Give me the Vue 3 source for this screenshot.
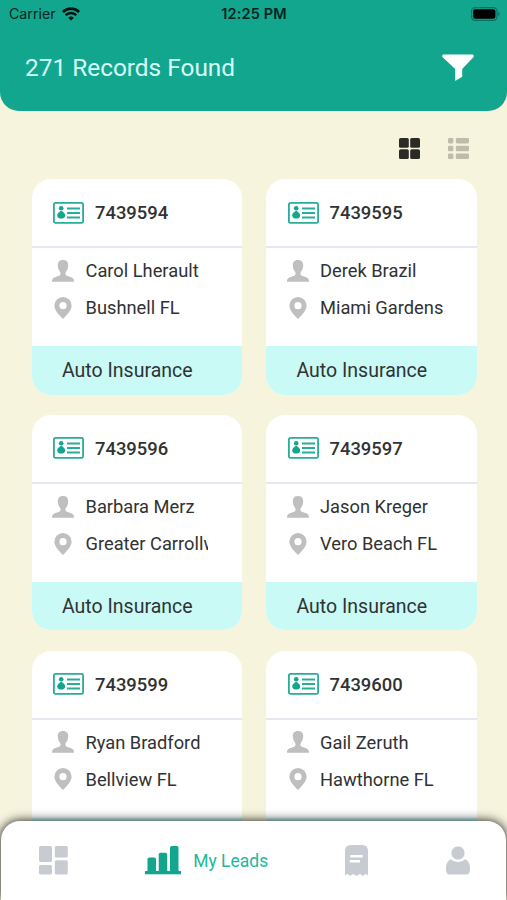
<template>
  <div class="screen">
    <header class="header">
      <div class="status-bar">
        <div class="carrier">
          <span>Carrier</span>
          <svg class="wifi" viewBox="0 0 18 14" width="18" height="14">
            <path d="M.9 5a11.5 11.5 0 0 1 16.2 0" />
            <path d="M3.7 8.2a7.500 7.500 0 0 1 10.600 0" />
            <path class="dot" d="M9 13.6 6.2 10.9a4 4 0 0 1 5.6 0z" />
          </svg>
        </div>
        <span class="time">12:25 PM</span>
        <svg class="battery" viewBox="0 0 30 14" width="30" height="14">
          <rect class="case" x=".6" y=".6" width="25.4" height="12.8" rx="3.6" />
          <rect x="2.2" y="2.3" width="22.2" height="9.4" rx="2" />
          <path class="cap" d="M27.3 4.9c1.9.8 1.9 3.4 0 4.2z" />
        </svg>
      </div>
      <div class="title-row">
        <h1>271 Records Found</h1>
        <svg class="filter" viewBox="0 0 34 28" width="34" height="28">
          <path d="M2 .5h30q1.4 1.1.6 2.4L21.2 15v7.7L14.2 27V15L1.4 2.9Q.6 1.6 2 .5z" />
        </svg>
      </div>
    </header>

    <div class="view-toggle">
      <svg viewBox="0 0 21 21" width="21" height="21" fill="#2b2a26">
        <rect width="9.8" height="9.8" rx="1.6" />
        <rect x="11.2" width="9.8" height="9.8" rx="1.6" />
        <rect y="11.2" width="9.8" height="9.8" rx="1.6" />
        <rect x="11.2" y="11.2" width="9.8" height="9.8" rx="1.6" />
      </svg>
      <svg viewBox="0 0 21 21" width="21" height="21" fill="#bebcaa">
        <template v-for="y in [0, 7.8, 15.6]" :key="y">
          <rect :y="y" width="5.4" height="5.4" rx="1.3" />
          <rect x="7.8" :y="y" width="13.2" height="5.4" rx="1.3" />
        </template>
      </svg>
    </div>

    <main class="leads">
      <article v-for="lead in leads" :key="lead.id" class="card">
        <div class="card-head">
          <svg class="id-icon" viewBox="0 0 31 22" width="31" height="22">
            <rect class="frame" x=".9" y=".9" width="29.2" height="20" rx="1.5" />
            <circle cx="8.2" cy="6.2" r="2.3" />
            <path d="M8.2 8.800c1 0 1.300.9 1.900 1.500 1.500.7 2.100 1.900 2.100 3.200 0 2.100-1.500 3.100-4 3.100s-4-1-4-3.100c0-1.300.6-2.500 2.100-3.200.6-.6.9-1.500 1.900-1.500z" />
            <path class="lines" d="M14 6.5h13M14 11h13M14 15.5h13" />
          </svg>
          <span>{{ lead.id }}</span>
        </div>
        <div class="card-body">
          <div class="row">
            <svg viewBox="0 0 22 22" width="22" height="22">
              <path d="M11 0c3.6 0 5.4 2.2 5.2 5.4-.1 2.6-.9 4.700-2.300 6.300-.8 1.600-.6 3.200.8 4l4.500 1.500c2 .8 2.800 2 2.800 4.500H0c0-2.500.8-3.700 2.800-4.500l4.500-1.500c1.400-.8 1.600-2.400.8-4-1.400-1.600-2.200-3.700-2.300-6.300C5.600 2.200 7.400 0 11 0z" />
            </svg>
            <span class="value">{{ lead.name }}</span>
          </div>
          <div class="row">
            <svg viewBox="0 0 22 22" width="22" height="22">
              <path fill-rule="evenodd" d="M11 0a8.6 8.6 0 0 1 8.6 8.6c0 4.6-3.8 8.6-8.6 13.4C6.2 17.2 2.4 13.2 2.4 8.6A8.6 8.6 0 0 1 11 0zm0 5.1a3.6 3.6 0 1 0 0 7.2 3.6 3.6 0 0 0 0-7.2z" />
            </svg>
            <span class="value">{{ lead.city }}</span>
          </div>
        </div>
        <div class="card-foot">Auto Insurance</div>
      </article>
    </main>

    <nav class="tab-bar">
      <svg class="tab-home" viewBox="0 0 29 29" width="29" height="29">
        <rect width="13" height="16" rx="1.5" />
        <rect x="15.8" width="13" height="11.5" rx="1.5" />
        <rect y="19" width="13" height="9.5" rx="1.5" />
        <rect x="15.8" y="14.2" width="13" height="14.3" rx="1.5" />
      </svg>
      <div class="tab-active">
        <svg viewBox="0 0 36 29" width="36" height="29">
          <rect x="2.5" y="11.5" width="8.5" height="15" rx="1.7" />
          <rect x="13.7" y="6.7" width="8.5" height="20" rx="1.7" />
          <rect x="25" width="8.5" height="27" rx="1.7" />
          <rect y="25" width="36" height="3.3" />
        </svg>
        <span>My Leads</span>
      </div>
      <svg class="tab-bills" viewBox="0 0 23 31" width="23" height="31">
        <path d="M6 0h11q6 0 6 6v24.5l-2.3-1.8-2.2 1.8h-1.4l-2.2-1.8-2.3 1.8h-2.2l-2.2-1.8-2.200 1.8H4.6l-2.300-1.8L0 30.5V6q0-6 6-6z" />
        <path class="note" d="M5.3 11.3h12.4M4.8 16.3h10.2" />
      </svg>
      <svg class="tab-profile" viewBox="0 0 24 29" width="24" height="29">
        <path d="M5 13.2c4 3.7 10 3.7 14 0 3.6 1.3 5 5.1 5 9.3 0 4-1 6-4 6H4c-3 0-4-2-4-6 0-4.2 1.400-8 5-9.3z" />
        <circle cx="12" cy="7" r="7" />
      </svg>
    </nav>
  </div>
</template>

<script setup>
const leads = [
  { id: '7439594', name: 'Carol Lherault', city: 'Bushnell FL' },
  { id: '7439595', name: 'Derek Brazil', city: 'Miami Gardens' },
  { id: '7439596', name: 'Barbara Merz', city: 'Greater Carrollwood' },
  { id: '7439597', name: 'Jason Kreger', city: 'Vero Beach FL' },
  { id: '7439599', name: 'Ryan Bradford', city: 'Bellview FL' },
  { id: '7439600', name: 'Gail Zeruth', city: 'Hawthorne FL' }
];
</script>

<style scoped>
.screen {
  display: flex;
  flex-direction: column;
  height: 900px;
  overflow: hidden;
  background: #f7f4de;
  color: #303233;
  font-family: Roboto, sans-serif;
}

svg {
  display: block;
  flex: none;
}

.header {
  flex: none;
  height: 110.5px;
  background: #13a68f;
  border-radius: 0 0 19px 19px;
}

.status-bar {
  display: grid;
  grid-template-columns: 1fr auto 1fr;
  align-items: center;
  height: 27px;
  padding: 0 6px 0 9px;
  color: #06241f;
  font-family: Inter, sans-serif;
  font-size: 14.2px;
}

.carrier {
  display: flex;
  align-items: center;
  gap: 6px;
}

.wifi {
  fill: none;
  stroke: #06100e;
  stroke-width: 2.6;
}

.wifi .dot {
  fill: #06100e;
  stroke: none;
}

.time {
  margin-right: 2px;
  font-size: 14.5px;
  font-weight: 600;
  letter-spacing: 0.15px;
}

.battery {
  justify-self: end;
}

.battery .case {
  fill: none;
  stroke: #0b6f60;
  stroke-width: 1.2;
}

.battery .cap {
  fill: #0b6f60;
}

.title-row {
  display: flex;
  justify-content: space-between;
  align-items: center;
  height: 82px;
  padding: 0 32px 0 25px;
}

h1 {
  margin: 0;
  padding-bottom: 1px;
  color: #d5fff8;
  font-size: 24.4px;
  font-weight: 400;
}

.filter {
  fill: #fff;
}

.view-toggle {
  display: flex;
  flex: none;
  justify-content: flex-end;
  gap: 28px;
  height: 41px;
  padding: 27.5px 38px 0 0;
}

.leads {
  display: grid;
  flex: 1;
  grid-template-columns: 210.5px 210.5px;
  grid-auto-rows: 215.5px;
  gap: 20.3px 24px;
  min-height: 0;
  padding-left: 31.5px;
  overflow: hidden;
}

.card {
  display: flex;
  flex-direction: column;
  overflow: hidden;
  background: #fff;
  border-radius: 19px;
}

.card-head {
  display: flex;
  align-items: center;
  gap: 11px;
  height: 67px;
  padding-left: 21.5px;
  border-bottom: 2px solid #e6e7f3;
  font-size: 18.4px;
  font-weight: 500;
}

.id-icon {
  fill: #13a68f;
}

.id-icon .frame {
  fill: none;
  stroke: #28ad98;
  stroke-width: 1.8;
}

.id-icon .lines {
  stroke: #28ad98;
  stroke-width: 1.9;
}

.card-body {
  display: flex;
  flex: 1;
  flex-direction: column;
  gap: 15px;
  padding: 11.9px 0 0 20.5px;
}

.row {
  display: flex;
  align-items: center;
  gap: 11.5px;
  height: 22px;
  font-size: 18.3px;
}

.row svg {
  fill: #bfbfbf;
}

.value {
  width: 122.8px;
  overflow: hidden;
  white-space: nowrap;
}

.card-foot {
  height: 48.5px;
  padding-left: 30.5px;
  background: #c9faf6;
  font-size: 19.5px;
  line-height: 50px;
}

.tab-bar {
  position: relative;
  display: flex;
  flex: none;
  align-items: center;
  justify-content: space-between;
  height: 79.5px;
  margin: -20px 1px 0;
  padding: 0 36.5px 0 37.5px;
  background: #fff;
  border-radius: 19px 19px 0 0;
  box-shadow: 0 0 11px rgba(0, 0, 0, 0.95);
  fill: #c8cbd2;
}

.tab-active {
  display: flex;
  align-items: center;
  gap: 12.5px;
  color: #20b99b;
  fill: #13a68f;
  font-size: 17.5px;
}

.tab-active span {
  padding-top: 2px;
}

.tab-bills .note {
  fill: none;
  stroke: #fff;
  stroke-width: 2.5;
}

.tab-profile circle {
  stroke: #fff;
  stroke-width: 0.8;
}
</style>

<style>
body {
  margin: 0;
}
</style>
